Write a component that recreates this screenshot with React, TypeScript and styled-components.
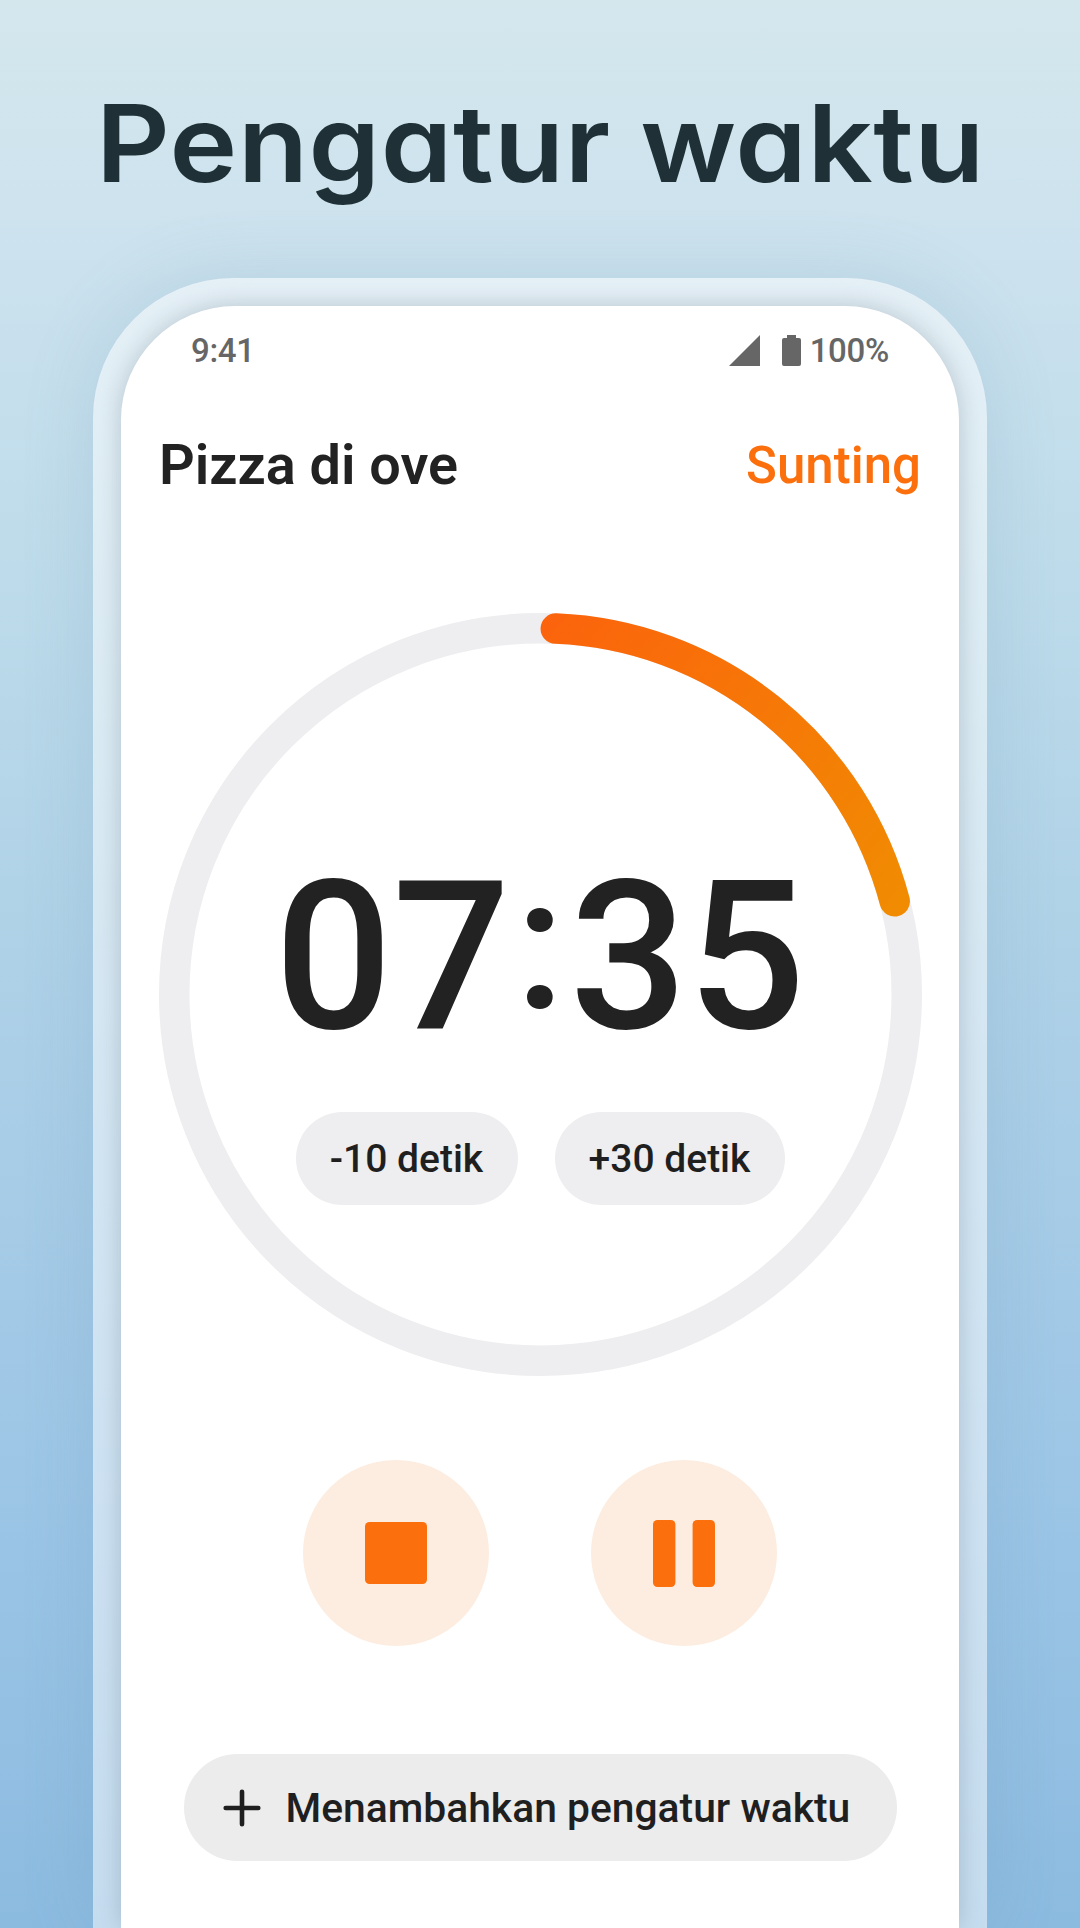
import React from 'react';
import styled, { createGlobalStyle } from 'styled-components';

const RADIUS = 366.25;
const CENTER = 381.5;

const App = () => {
  return (
    <Page>
      <GlobalStyle />
      <Title>Pengatur waktu</Title>
      <PhoneFrame>
        <Screen>
          <StatusBar>
            <span>9:41</span>
            <StatusIcons>
              <svg width="31" height="31" viewBox="0 0 31 31">
                <path d="M31 0V31H0Z" fill="#666" />
              </svg>
              <BatteryIcon width="19" height="31" viewBox="0 0 19 31">
                <path
                  d="M5 0H14V3H17A2 2 0 0 1 19 5V29A2 2 0 0 1 17 31H2A2 2 0 0 1 0 29V5A2 2 0 0 1 2 3H5Z"
                  fill="#666"
                />
              </BatteryIcon>
              <span>100%</span>
            </StatusIcons>
          </StatusBar>
          <Header>
            <TimerName>Pizza di ove</TimerName>
            <EditLink>Sunting</EditLink>
          </Header>
          <Dial>
            <DialRing viewBox="0 0 763 763">
              <defs>
                <linearGradient id="progress" gradientUnits="userSpaceOnUse" x1="390" y1="15" x2="736" y2="288">
                  <stop offset="0" stopColor="#fb640c" />
                  <stop offset="1" stopColor="#f18b02" />
                </linearGradient>
              </defs>
              <circle cx={CENTER} cy={CENTER} r={RADIUS} fill="none" stroke="#eeeef0" strokeWidth="30.5" />
              <path
                d={`M396.8 15.6A${RADIUS} ${RADIUS} 0 0 1 735.7 288.2`}
                fill="none"
                stroke="url(#progress)"
                strokeWidth="30.5"
                strokeLinecap="round"
              />
            </DialRing>
            <Time>
              07<Colon>:</Colon>35
            </Time>
            <Steps>
              <StepButton $width={222}>-10 detik</StepButton>
              <StepButton $width={230}>+30 detik</StepButton>
            </Steps>
          </Dial>
          <Controls>
            <RoundButton aria-label="Stop">
              <svg width="62" height="62" viewBox="0 0 62 62">
                <rect width="62" height="62" rx="4.5" fill="#fb6f0c" />
              </svg>
            </RoundButton>
            <RoundButton aria-label="Pause">
              <svg width="62" height="67" viewBox="0 0 62 67">
                <rect width="22.4" height="67" rx="4.5" fill="#fb6f0c" />
                <rect x="39.6" width="22.4" height="67" rx="4.5" fill="#fb6f0c" />
              </svg>
            </RoundButton>
          </Controls>
          <AddButton>
            <svg width="38" height="38" viewBox="0 0 38 38">
              <path d="M19 2.7V35.3M2.7 19H35.3" stroke="#1f1f1f" strokeWidth="4.6" strokeLinecap="round" />
            </svg>
            <span>Menambahkan pengatur waktu</span>
          </AddButton>
        </Screen>
      </PhoneFrame>
    </Page>
  );
};
export default App;

const GlobalStyle = createGlobalStyle`
  * {
    box-sizing: border-box;
  }

  body {
    margin: 0;
    font-family: Roboto, 'Liberation Sans', sans-serif;
  }

  button {
    border: none;
    padding: 0;
    font-family: inherit;
    font-weight: 500;
    color: #1f1f1f;
    cursor: pointer;
  }

  svg {
    display: block;
  }
`;

const Page = styled.div`
  display: flex;
  flex-direction: column;
  align-items: center;
  width: 1080px;
  height: 1928px;
  overflow: hidden;
  background: linear-gradient(180deg, #d4e7ed 0%, #cce2ee 13%, #bddbea 30%, #aed1e7 50%, #9dc6e6 76%, #8cbbe0 100%);
`;

const Title = styled.h1`
  flex: none;
  height: 278px;
  margin: 0;
  padding-top: 80px;
  font-family: Inter, sans-serif;
  font-size: 107px;
  font-weight: 600;
  line-height: 126px;
  letter-spacing: 0.6px;
  font-feature-settings: 'cv11';
  white-space: nowrap;
  color: #1f3036;
  transform: scaleX(1.07);
`;

const PhoneFrame = styled.div`
  flex: none;
  width: 894px;
  height: 1650px;
  padding: 28px 28px 0;
  border-radius: 140px 140px 0 0;
  background: rgba(255, 255, 255, 0.5);
  box-shadow: 0 0 70px rgba(90, 135, 165, 0.18);
`;

const Screen = styled.div`
  display: flex;
  flex-direction: column;
  align-items: center;
  height: 100%;
  border-radius: 114px 114px 0 0;
  background: #fff;
  box-shadow: 0 0 24px rgba(100, 120, 135, 0.36);
  /* keeps the shadow on the case, it must not spill past its edge */
  clip-path: inset(-28px -28px 0 -28px round 140px 140px 0 0);
`;

const StatusBar = styled.div`
  display: flex;
  align-items: center;
  justify-content: space-between;
  width: 100%;
  height: 88px;
  padding: 0 70px;
  font-size: 33px;
  font-weight: 500;
  letter-spacing: -0.3px;
  color: #666;
`;

const StatusIcons = styled.div`
  display: flex;
  align-items: center;
`;

const BatteryIcon = styled.svg`
  margin: 0 9px 0 22px;
`;

const Header = styled.div`
  display: flex;
  align-items: center;
  justify-content: space-between;
  width: 100%;
  height: 142px;
  padding: 0 38px;
`;

const TimerName = styled.h2`
  margin: 0;
  font-size: 55.8px;
  font-weight: 600;
  color: #222;
`;

const EditLink = styled.span`
  font-size: 51px;
  font-weight: 500;
  color: #fb6f0c;
`;

const Dial = styled.div`
  position: relative;
  display: flex;
  flex-direction: column;
  align-items: center;
  width: 763px;
  height: 763px;
  margin-top: 77px;
  padding-top: 240px;
`;

const DialRing = styled.svg`
  position: absolute;
  inset: 0;
`;

const Time = styled.div`
  position: relative;
  height: 208px;
  font-size: 207.5px;
  font-weight: 500;
  line-height: 208px;
  white-space: nowrap;
  color: #222;
`;

/* sits between the digits at half their height */
const Colon = styled.span`
  position: relative;
  top: -20px;
  margin: 0 5px;
  font-size: 186px;
  line-height: 1;
`;

const Steps = styled.div`
  position: relative;
  display: flex;
  gap: 37px;
  margin-top: 51px;
`;

const StepButton = styled.button<{ $width: number }>`
  width: ${(props) => props.$width}px;
  height: 93px;
  border-radius: 47px;
  background: #eeeef0;
  font-size: 39px;
`;

const Controls = styled.div`
  display: flex;
  gap: 102px;
  margin-top: 84px;
`;

const RoundButton = styled.button`
  display: flex;
  align-items: center;
  justify-content: center;
  width: 186px;
  height: 186px;
  border-radius: 50%;
  background: #fdede0;
`;

const AddButton = styled.button`
  display: flex;
  align-items: center;
  gap: 25px;
  width: 713px;
  height: 107px;
  margin-top: 108px;
  padding-left: 39px;
  border-radius: 54px;
  background: #ececed;
  font-size: 40.8px;
  white-space: nowrap;
`;
